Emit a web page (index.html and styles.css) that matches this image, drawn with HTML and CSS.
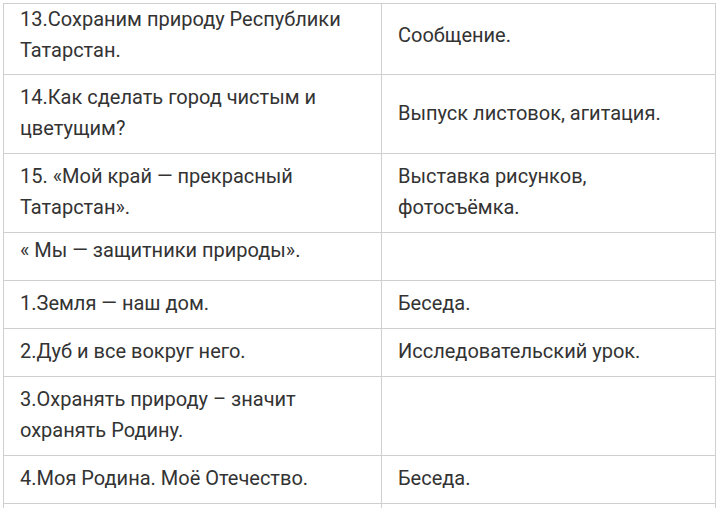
FILE: index.html
```html
<!DOCTYPE html>
<html lang="ru">
<head>
<meta charset="utf-8">
<link rel="stylesheet" href="styles.css">
</head>
<body>
<table class="plan">
  <tr class="first">
    <td class="c1">13.Сохраним природу Республики Татарстан.</td>
    <td class="c2">Сообщение.</td>
  </tr>
  <tr>
    <td class="c1">14.Как сделать город чистым и цветущим?</td>
    <td class="c2">Выпуск листовок, агитация.</td>
  </tr>
  <tr>
    <td class="c1">15. «Мой край — прекрасный Татарстан».</td>
    <td class="c2">Выставка рисунков, фотосъёмка.</td>
  </tr>
  <tr class="section">
    <td class="c1">« Мы — защитники природы».</td>
    <td class="c2"></td>
  </tr>
  <tr>
    <td class="c1">1.Земля — наш дом.</td>
    <td class="c2">Беседа.</td>
  </tr>
  <tr>
    <td class="c1">2.Дуб и все вокруг него.</td>
    <td class="c2">Исследовательский урок.</td>
  </tr>
  <tr>
    <td class="c1">3.Охранять природу – значит охранять Родину.</td>
    <td class="c2"></td>
  </tr>
  <tr>
    <td class="c1">4.Моя Родина. Моё Отечество.</td>
    <td class="c2">Беседа.</td>
  </tr>
  <tr class="tail">
    <td class="c1"></td>
    <td class="c2"></td>
  </tr>
</table>
</body>
</html>
```
FILE: styles.css
```css
html, body {
  margin: 0;
  padding: 0;
  background: #fff;
  overflow: hidden;
}
body {
  padding: 3px 0 0 3px;
}
.plan {
  border-collapse: collapse;
  width: 713px;
  table-layout: fixed;
  font-family: Roboto, "Liberation Sans", sans-serif;
  font-size: 20px;
  line-height: 31px;
  color: #333;
}
.plan td {
  border: 1px solid #cfcfcf;
  padding: 7px 16px 9px;
  vertical-align: middle;
}
.plan .c1 {
  width: 345px;
}
.plan .first td {
  padding-top: 0;
  padding-bottom: 8px;
}
.plan .section td {
  padding-top: 2px;
  padding-bottom: 14px;
}
.plan .tail td {
  height: 31px;
}
```
